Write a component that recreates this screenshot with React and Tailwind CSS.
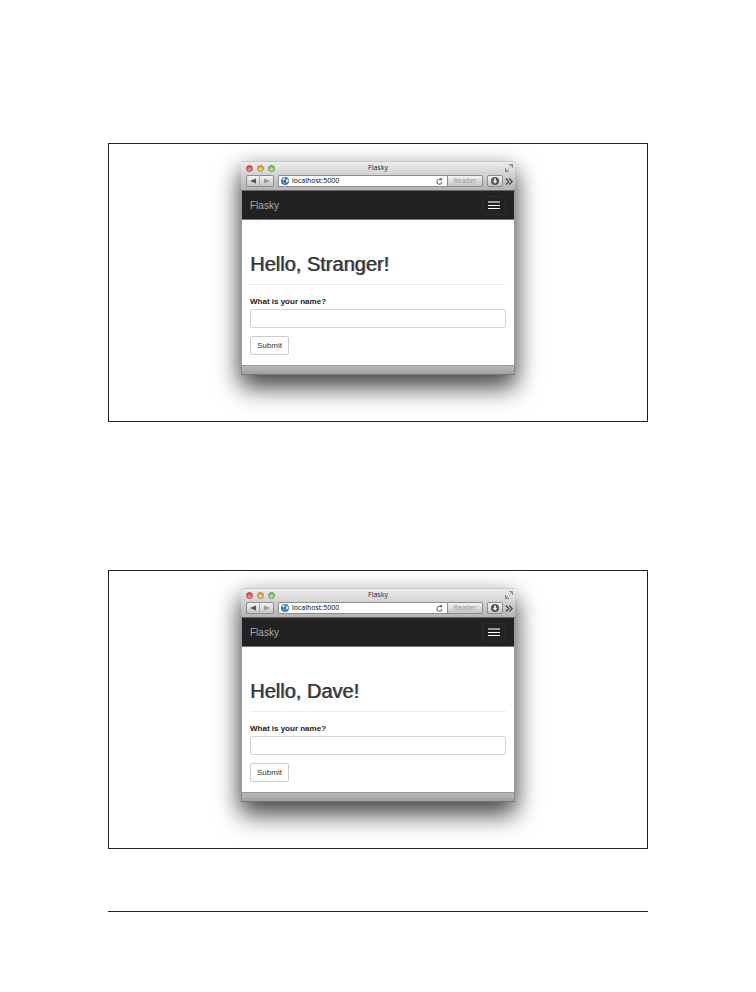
import React from "react";

function TrafficLights() {
  return (
    <div className="flex gap-1">
      <span className="h-[7px] w-[7px] rounded-full border border-[#a8423c] bg-linear-to-b from-[#d8403c] to-[#ffa09a]" />
      <span className="h-[7px] w-[7px] rounded-full border border-[#b47c38] bg-linear-to-b from-[#e39a3a] to-[#ffe08a]" />
      <span className="h-[7px] w-[7px] rounded-full border border-[#5f9448] bg-linear-to-b from-[#74b757] to-[#c9f0a8]" />
    </div>
  );
}

function TitleBar() {
  return (
    <div className="grid h-3 grid-cols-[1fr_auto_1fr] items-center px-[5px]">
      <TrafficLights />
      <span className="text-[7px] leading-[10px] font-medium text-[#222]">Flasky</span>
      <svg className="-mr-[3px] h-2 w-2 justify-self-end" viewBox="0 0 8 8" fill="none" stroke="#888" strokeWidth="1">
        <path d="M4 .5h3.5V4M7.2.8 4.8 3.2M.5 4v3.5H4M.8 7.2l2.4-2.4" />
      </svg>
    </div>
  );
}

function Toolbar({ id }) {
  const key =
    "flex items-center justify-center border border-[#8d8d8d] bg-linear-to-b from-[#f4f4f4] to-[#c4c4c4]";
  return (
    <div className="mt-px flex h-[12px] items-center pr-[2px] pl-[5px]">
      <button type="button" aria-label="Back" className={`${key} h-[12px] w-[14px] rounded-l-[2px] border-r-[#aaa]`}>
        <svg className="h-[6px] w-[6px]" viewBox="0 0 6 6">
          <path d="M0 3 6 .5v5z" fill="#555" />
        </svg>
      </button>
      <button type="button" aria-label="Forward" className={`${key} h-[12px] w-[14px] rounded-r-[2px] border-l-0`}>
        <svg className="h-[6px] w-[6px]" viewBox="0 0 6 6">
          <path d="M6 3 0 .5v5z" fill="#999" />
        </svg>
      </button>
      <div className="ml-1 flex h-[12px] min-w-0 flex-1 items-center rounded-l-[2px] border border-r-0 border-[#8d8d8d] bg-white pr-1 pl-[2px]">
        <svg className="h-2 w-2 shrink-0" viewBox="0 0 8 8">
          <circle cx="4" cy="4" r="4" fill="#2f79c0" />
          <path d="M2 1.2 4 .8 3.8 2.6 2.4 3.6 1 3zM5 2.5l1.8-.6.6 2L6 6 5 4.5zM2 5l1.6.4L3.4 7z" fill="#cfe6f7" />
        </svg>
        <input
          id={`${id}-url`}
          aria-label="Address"
          defaultValue="localhost:5000"
          className="ml-[3px] h-[10px] min-w-0 flex-1 bg-transparent text-[7px] leading-[10px] font-medium text-black outline-none"
        />
        <button type="button" aria-label="Reload" className="flex">
          <svg className="h-[7px] w-[7px]" viewBox="0 0 7 7" fill="none" stroke="#555">
            <path d="M5.9 4A2.5 2.5 0 1 1 4.6 1.6" />
            <path d="M4 0l2.6.6L5 3z" fill="#555" stroke="none" />
          </svg>
        </button>
      </div>
      <button type="button" className={`${key} h-[12px] w-[36px] rounded-r-[2px] text-[7px] leading-[10px] text-[#999]`}>
        Reader
      </button>
      <button type="button" aria-label="Downloads" className={`${key} ml-1 h-[12px] w-4 rounded-[2px]`}>
        <svg className="h-2 w-2" viewBox="0 0 8 8">
          <circle cx="4" cy="4" r="4" fill="#555" />
          <path d="M3.2 1.5h1.6V4h1.5L4 6.5 1.7 4h1.5z" fill="#fff" />
        </svg>
      </button>
      <button type="button" aria-label="More" className="ml-[2px] flex">
        <svg className="h-[7px] w-2" viewBox="0 0 8 7" fill="none" stroke="#444" strokeWidth="1.2">
          <path d="M.8.5l3 3-3 3M4.2.5l3 3-3 3" />
        </svg>
      </button>
    </div>
  );
}

function BrowserWindow({ id, name }) {
  return (
    <div className="w-[274px] rounded-t-[3px] bg-white font-['Liberation_Sans',Arial,sans-serif] shadow-[0_12px_26px_rgba(0,0,0,0.65),0_8px_20px_rgba(0,0,0,0.25)]">
      <div className="h-[30px] rounded-t-[3px] border-t border-b border-t-[#c8c8c8] border-b-[#666] bg-linear-to-b from-[#ececec] to-[#b4b4b4] font-['Open_Sans','Noto_Sans',sans-serif]">
        <TitleBar />
        <Toolbar id={id} />
      </div>
      <div className="border-x border-[#999]">
        <nav className="flex h-[29px] items-center justify-between border-b border-[#777] bg-[#222] px-2">
          <a href="#" className="pt-[2px] text-[10px] leading-[12px] text-[#aaa]">
            Flasky
          </a>
          <button
            type="button"
            aria-label="Toggle navigation"
            className="flex h-[19px] w-6 flex-col items-center justify-center gap-[2px] rounded-[3px] border border-[#2d2d2d]"
          >
            <span className="h-[2px] w-3 bg-[#999]" />
            <span className="h-px w-3 bg-white" />
            <span className="h-px w-3 bg-white" />
          </button>
        </nav>
        <main className="px-2 pt-8 pb-[10px] text-[#333]">
          <h1 className="border-b border-[#eee] pb-2 text-[20px] leading-6 font-normal text-shadow-[1px_0_0_#33333399]">
            Hello, {name}!
          </h1>
          <form className="pt-[11px]" onSubmit={(e) => e.preventDefault()}>
            <label htmlFor={`${id}-name`} className="block text-[8px] leading-[11px] font-bold text-[#222]">
              What is your name?
            </label>
            <input
              id={`${id}-name`}
              type="text"
              className="mt-[2px] block h-[19px] w-full rounded-[2px] border border-[#d4d4d4] bg-white px-[6px] text-[8px] outline-none"
            />
            <button
              type="submit"
              className="mt-2 block h-[19px] rounded-[2px] border border-[#ccc] bg-white px-[6px] text-[8px] leading-[17px]"
            >
              Submit
            </button>
          </form>
        </main>
      </div>
      <div className="h-[10px] border border-x-[#888] border-t-[#999] border-b-[#777] bg-linear-to-b from-[#b8b8b8] to-[#a0a0a0]" />
    </div>
  );
}

function Figure({ id, name }) {
  return (
    <figure className="flex justify-center border border-[#222] pt-[17px] pb-[46px]">
      <BrowserWindow id={id} name={name} />
    </figure>
  );
}

export default function App() {
  return (
    <div className="bg-white px-[108px] pt-[143px] pb-20">
      <div className="flex flex-col gap-[148px]">
        <Figure id="stranger" name="Stranger" />
        <Figure id="dave" name="Dave" />
      </div>
      <hr className="mt-[62px] border-t border-[#222]" />
    </div>
  );
}
